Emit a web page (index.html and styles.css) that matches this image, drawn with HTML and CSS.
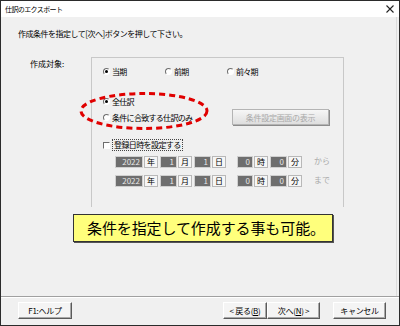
FILE: index.html
```html
<!DOCTYPE html>
<html lang="ja">
<head>
    <meta charset="UTF-8">
    <title>仕訳のエクスポート</title>
    <link rel="stylesheet" href="styles.css">
</head>
<body>
    <div class="window">
        <div class="titlebar">
            <span class="title">仕訳のエクスポート</span>
            <svg class="close" width="8" height="8" viewBox="0 0 8 8">
                <path d="M0.5 0.5 L7.5 7.5 M7.5 0.5 L0.5 7.5" stroke="#222" stroke-width="1.1" fill="none"/>
            </svg>
        </div>

        <div class="body">
            <p class="intro">作成条件を指定して[次へ]ボタンを押して下さい。</p>

            <div class="target">
                <div class="target-label">作成対象:</div>
                <div class="group">
                    <div class="period">
                        <label class="radio-item"><span class="radio checked"></span>当期</label>
                        <label class="radio-item"><span class="radio"></span>前期</label>
                        <label class="radio-item"><span class="radio"></span>前々期</label>
                    </div>

                    <div class="scope">
                        <div class="scope-options">
                            <label class="radio-item"><span class="radio checked"></span>全仕訳</label>
                            <label class="radio-item"><span class="radio"></span>条件に合致する仕訳のみ</label>
                        </div>
                        <button class="btn-disabled" disabled>条件設定画面の表示</button>
                    </div>

                    <div class="check-row">
                        <span class="checkbox"></span>
                        <span class="focus-label">登録日時を設定する</span>
                    </div>

                    <div class="date-row">
                        <span class="field year">2022</span><span class="unit">年</span>
                        <span class="field">1</span><span class="unit">月</span>
                        <span class="field">1</span><span class="unit">日</span>
                        <span class="field hour">0</span><span class="unit">時</span>
                        <span class="field">0</span><span class="unit">分</span>
                        <span class="suffix">から</span>
                    </div>
                    <div class="date-row second">
                        <span class="field year">2022</span><span class="unit">年</span>
                        <span class="field">1</span><span class="unit">月</span>
                        <span class="field">1</span><span class="unit">日</span>
                        <span class="field hour">0</span><span class="unit">時</span>
                        <span class="field">0</span><span class="unit">分</span>
                        <span class="suffix">まで</span>
                    </div>
                </div>
            </div>

            <div class="callout">条件を指定して作成する事も可能。</div>
        </div>

        <div class="footer">
            <button class="btn help">F1:ヘルプ</button>
            <div class="nav">
                <button class="btn back">&lt; 戻る(<u>B</u>)</button>
                <button class="btn next">次へ(<u>N</u>) &gt;</button>
            </div>
            <button class="btn cancel">キャンセル</button>
        </div>

        <!-- red marker round the scope options -->
        <svg class="highlight" width="134" height="44" viewBox="0 0 134 44">
            <ellipse cx="67" cy="22" rx="63" ry="17.5" fill="none" stroke="#e00000" stroke-width="3" stroke-dasharray="6 4"/>
        </svg>
    </div>
</body>
</html>
```

FILE: styles.css
```css
* {
    box-sizing: border-box;
}
body {
    margin: 0;
    font-family: "Noto Sans CJK JP", "Liberation Sans", sans-serif;
    color: #000;
    background: #fff;
}
.window {
    position: relative;
    width: 400px;
    height: 326px;
    border: 1px solid #2b2b2b;
    background: #f0f0f0;
    display: flex;
    flex-direction: column;
}
.titlebar {
    height: 16px;
    background: #fff;
    display: flex;
    align-items: center;
    justify-content: space-between;
    padding: 0 5px 0 4px;
}
.title {
    font-size: 7px;
    letter-spacing: -0.6px;
    line-height: 10px;
}
.close {
    display: block;
}

.body {
    flex: 1;
    padding: 0 0 0 17px;
    margin-right: 2px;
    border-right: 1px solid #dcdcdc;
}
.intro {
    margin: 12px 0 0;
    font-size: 8px;
    line-height: 10px;
    letter-spacing: -0.5px;
}

.target {
    display: flex;
    margin-top: 18px;
}
.target-label {
    width: 61px;
    margin: 2px 0 0 12px;
    font-size: 8px;
    line-height: 10px;
}
.group {
    width: 253px;
    height: 150px;
    border: 1px solid #c8c8c8;
    border-bottom: none;
    padding: 7px 0 0 11px;
}

.period {
    display: flex;
    height: 12px;
}
.period .radio-item {
    width: 62px;
}
.radio-item {
    display: flex;
    align-items: center;
    height: 12px;
    font-size: 8px;
    letter-spacing: -0.7px;
    white-space: nowrap;
}
.radio {
    width: 7px;
    height: 7px;
    margin-right: 2px;
    border-radius: 50%;
    border: 1px solid;
    border-color: #6d6d6d #fff #fff #6d6d6d;
    background: #fff;
    display: flex;
    align-items: center;
    justify-content: center;
}
.radio.checked::after {
    content: "";
    width: 3px;
    height: 3px;
    border-radius: 50%;
    background: #000;
}

.scope {
    display: flex;
    margin-top: 18px;
}
.scope-options {
    width: 129px;
    display: flex;
    flex-direction: column;
    gap: 4px;
}
.btn-disabled {
    margin-top: 14px;
    width: 97px;
    height: 16px;
    padding: 0;
    font-family: inherit;
    font-size: 8px;
    letter-spacing: -0.3px;
    color: #a8a8a8;
    background: linear-gradient(#f6f6f6, #dedede);
    border: 1px solid #b4b4b4;
    box-shadow: 1px 1px 0 #8c8c8c;
}

.check-row {
    display: flex;
    align-items: center;
    height: 12px;
    margin-top: 14px;
}
.checkbox {
    width: 7px;
    height: 7px;
    margin-right: 2px;
    border: 1px solid;
    border-color: #6d6d6d #fff #fff #6d6d6d;
    background: #fff;
}
.focus-label {
    font-size: 8px;
    line-height: 10px;
    letter-spacing: -0.6px;
    border: 1px dotted #444;
    padding: 0 1px;
}

.date-row {
    display: flex;
    height: 12px;
    margin: 5px 0 0 12px;
    font-size: 8px;
    line-height: 10px;
}
.date-row.second {
    margin-top: 7px;
}
.field {
    width: 17px;
    padding-right: 2px;
    text-align: right;
    color: #e8e8e8;
    background: #6e6e6e;
    border: 1px solid #d0d0d0;
}
.field.year {
    width: 28px;
}
.field.hour {
    margin-left: 9px;
    width: 16px;
}
.unit {
    width: 14px;
    margin: 0 2px 0 1px;
    text-align: center;
    background: #f6f6f6;
    border: 1px solid #b8b8b8;
}
.suffix {
    margin-left: 10px;
    color: #a8a8a8;
}

.callout {
    width: 260px;
    height: 28px;
    margin: 7px 0 0 55px;
    padding-left: 13px;
    background: #ffff7c;
    border: 1px solid #333;
    box-shadow: 1px 1px 0 #555;
    font-size: 15px;
    line-height: 26px;
    letter-spacing: -0.1px;
    white-space: nowrap;
}

.footer {
    height: 29px;
    border-top: 1px solid #a0a0a0;
    box-shadow: inset 0 1px 0 #fff;
    padding: 5px 13px 0 17px;
    display: flex;
    align-items: flex-start;
}
.nav {
    display: flex;
    margin-left: auto;
}
.btn {
    height: 17px;
    padding: 0;
    font-family: inherit;
    font-size: 8px;
    letter-spacing: -0.3px;
    color: #000;
    background: #f4f4f4;
    border: 1px solid;
    border-color: #fff #5a5a5a #5a5a5a #fff;
    box-shadow: inset -1px -1px 0 #a8a8a8;
}
.help {
    width: 54px;
}
.back {
    width: 44px;
}
.next {
    width: 53px;
}
.cancel {
    width: 53px;
    margin-left: 13px;
}

.highlight {
    position: absolute;
    left: 76px;
    top: 88px;
}
```
